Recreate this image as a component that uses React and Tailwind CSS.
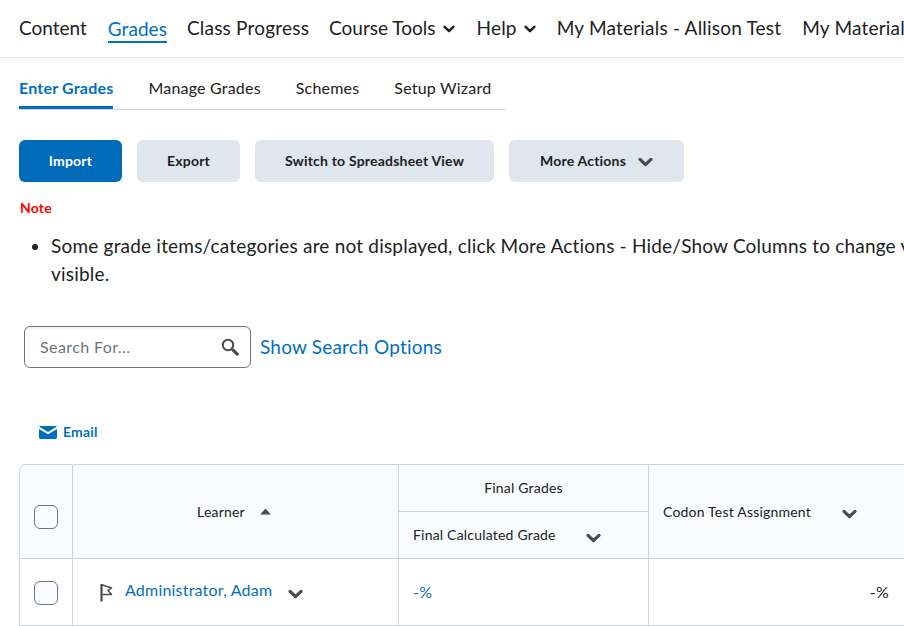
import React from "react";

const Chevron = ({ className = "" }) => (
  <svg viewBox="0 0 16 10" className={className} fill="none" stroke="currentColor" strokeWidth="3.4" strokeLinecap="round" strokeLinejoin="round">
    <path d="M2.2 2.2L8 7.8l5.8-5.6" />
  </svg>
);

const NavChevron = () => <Chevron className="w-[12px] h-[8px] text-[#202122]" />;
const TableChevron = ({ className = "" }) => <Chevron className={`w-[15px] h-[10px] text-[#494c4e] ${className}`} />;

const Checkbox = () => (
  <div className="w-[24px] h-[24px] rounded-[6px] border border-[#6e7477] bg-[#f9fbff]" />
);

export default function App() {
  return (
    <div className="w-[904px] h-[626px] overflow-hidden bg-white text-[#202122] tracking-[0.2px] font-['Lato',sans-serif]">
      <nav className="h-[58px] flex items-center gap-[20px] pl-[19px] border-b border-[#e6e6e6] text-[19px] whitespace-nowrap overflow-hidden">
        <span className="tracking-normal mr-[1px]">Content</span>
        <span className="text-[#006fbf] leading-[24px] border-b-2 border-[#006fbf] mt-[2px] tracking-[0.05px]">Grades</span>
        <span>Class Progress</span>
        <span className="flex items-center gap-[7px] tracking-normal">Course Tools <NavChevron /></span>
        <span className="ml-[2px] flex items-center gap-[7px]">Help <NavChevron /></span>
        <span className="ml-[1px]">My Materials - Allison Test</span>
        <span className="ml-[1px]">My Materials</span>
      </nav>
      <div className="h-[4px] bg-[#fafafa]" />

      <div className="pl-[19px]">
        <div className="w-[487px] h-[48px] flex items-end gap-[35px] border-b border-[#cdd5dc] text-[16px]">
          <span className="h-[47px] flex items-center pt-[8px] font-bold text-[#006fbf] border-b-[3px] border-[#006fbf]">Enter Grades</span>
          <span className="h-[47px] flex items-center pt-[7px] pb-[3px]">Manage Grades</span>
          <span className="h-[47px] flex items-center pt-[7px] pb-[3px]">Schemes</span>
          <span className="h-[47px] flex items-center pt-[7px] pb-[3px]">Setup Wizard</span>
        </div>

        <div className="mt-[30px] flex gap-[15px] text-[14px] font-bold">
          <button className="w-[103px] h-[42px] pb-[2px] rounded-[6px] bg-[#006bb8] text-white">Import</button>
          <button className="w-[103px] h-[42px] pb-[2px] rounded-[6px] bg-[#dfe6ee]">Export</button>
          <button className="w-[239px] h-[42px] pb-[2px] rounded-[6px] bg-[#dfe6ee]">Switch to Spreadsheet View</button>
          <button className="w-[175px] h-[42px] pb-[2px] rounded-[6px] bg-[#dfe6ee] flex items-center justify-center gap-[12px]">
            More Actions <TableChevron className="mt-[4px]" />
          </button>
        </div>

        <div className="mt-[17px] ml-[1px] text-[14px] leading-[18px] font-bold text-[#ff0000]">Note</div>

        <ul className="mt-[15px] ml-[13px] w-[1000px] list-disc pl-[19px] text-[19px] leading-[28px]">
          <li>Some grade items/categories are not displayed, click More Actions - Hide/Show Columns to change view of what is visible.</li>
        </ul>

        <div className="mt-[38px] ml-[5px] flex items-center gap-[9px]">
          <div className="w-[227px] h-[42px] rounded-[6px] border border-[#6e7477] flex items-center justify-between pl-[15px] pr-[11px] shadow-[inset_0_2px_0_0_#f5f5f5]">
            <span className="text-[16px] text-[#6e7477] tracking-[0.4px]">Search For...</span>
            <svg viewBox="0 0 18 18" className="w-[18px] h-[18px] text-[#494c4e]" fill="none">
              <circle cx="7" cy="7" r="5.2" stroke="currentColor" strokeWidth="2" />
              <path d="M11.8 11.8L16.2 16.2" stroke="currentColor" strokeWidth="3.2" strokeLinecap="round" />
            </svg>
          </div>
          <span className="text-[19px] text-[#006fbf]">Show Search Options</span>
        </div>

        <div className="mt-[54px] ml-[20px] flex items-center gap-[6px] text-[14px] font-bold text-[#006fbf] leading-[20px]">
          <svg viewBox="0 0 18 13" className="w-[18px] h-[13px]" fill="currentColor">
            <path d="M1.5 0h15c.6 0 1.1.3 1.3.8L9 6 .2.8C.4.3.9 0 1.5 0z" />
            <path d="M0 3v8.5C0 12.3.7 13 1.5 13h15c.8 0 1.5-.7 1.5-1.5V3L9 8.3 0 3z" />
          </svg>
          Email
        </div>

        <table className="mt-[22px] w-[1000px] table-fixed border-separate border-spacing-0 text-[14px]">
          <colgroup>
            <col className="w-[54px]" />
            <col className="w-[326px]" />
            <col className="w-[250px]" />
            <col />
          </colgroup>
          <thead>
            <tr className="h-[48px] bg-[#f9fbff]">
              <th rowSpan={2} className="border border-[#cdd5dc] rounded-tl-[6px] font-normal">
                <div className="flex justify-center pt-[10px]"><Checkbox /></div>
              </th>
              <th rowSpan={2} className="border-y border-r border-[#cdd5dc] font-normal">
                <div className="flex items-center justify-center gap-[15px] pr-[3px]">
                  Learner
                  <svg viewBox="0 0 11 7" className="w-[11px] h-[7px] text-[#494c4e]" fill="currentColor"><path d="M5.5 0.5L10.8 6.5H0.2z" /></svg>
                </div>
              </th>
              <th className="border-t border-r border-b border-[#cdd5dc] font-normal pb-[2px]">Final Grades</th>
              <th rowSpan={2} className="border-y border-r border-[#cdd5dc] font-normal">
                <div className="flex items-center pl-[14px] gap-[31px]">
                  Codon Test Assignment <TableChevron className="mt-[4px]" />
                </div>
              </th>
            </tr>
            <tr className="h-[47px] bg-[#f9fbff]">
              <th className="border-r border-b border-[#cdd5dc] font-normal pb-[2px]">
                <div className="flex items-center pl-[14px] gap-[30px]">
                  Final Calculated Grade <TableChevron className="mt-[8px]" />
                </div>
              </th>
            </tr>
          </thead>
          <tbody>
            <tr className="h-[67px]">
              <td className="border-l border-r border-b border-[#cdd5dc]">
                <div className="flex justify-center pt-[2px]"><Checkbox /></div>
              </td>
              <td className="border-r border-b border-[#cdd5dc]">
                <div className="flex items-center pl-[26px] text-[16px] text-[#006fbf]">
                  <svg viewBox="0 0 14 19" className="w-[14px] h-[19px] mt-[1px] text-[#494c4e]" fill="none" stroke="currentColor">
                    <path d="M2.5 1v17.5" strokeWidth="2.2" />
                    <path d="M3 1.8L12.5 5 9 7.4l3.5 4H3" strokeWidth="1.5" strokeLinejoin="round" />
                  </svg>
                  <span className="ml-[12px] mb-[4px]">Administrator, Adam</span>
                  <TableChevron className="ml-[16px] mt-[3px]" />
                </div>
              </td>
              <td className="border-r border-b border-[#cdd5dc] pl-[14px] text-[16px] text-[#006fbf]">-%</td>
              <td className="border-r border-b border-[#cdd5dc] text-[16px]">
                <div className="w-[240px] text-right">-%</div>
              </td>
            </tr>
          </tbody>
        </table>
      </div>
    </div>
  );
}
